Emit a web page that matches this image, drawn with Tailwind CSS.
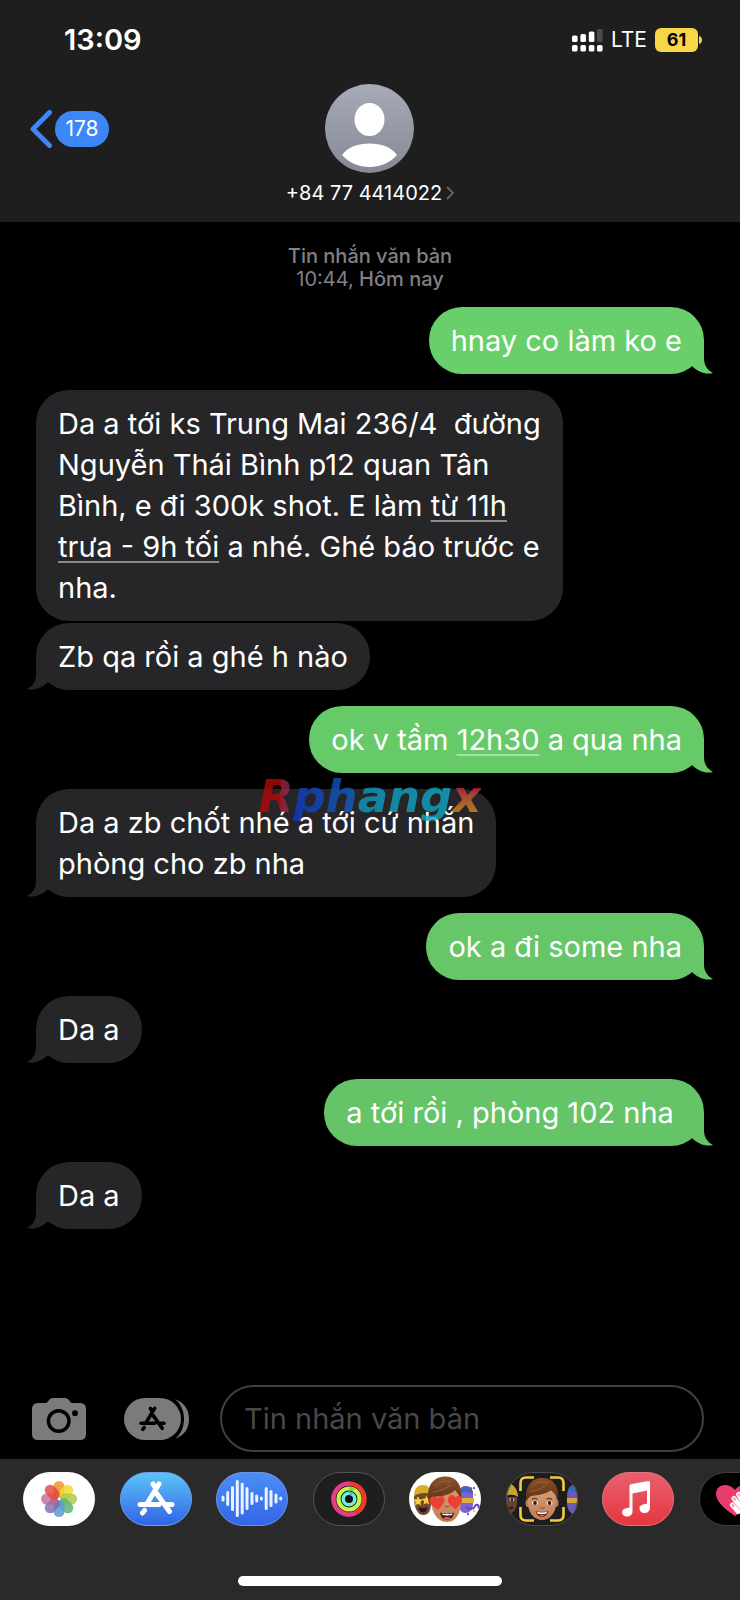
<!DOCTYPE html>
<html lang="vi">
<head>
    <meta charset="UTF-8">
    <meta name="viewport" content="width=device-width, initial-scale=1.0">
    <title>+84 77 4414022</title>
    <script src="https://cdn.jsdelivr.net/npm/@tailwindcss/browser@4"></script>
</head>
<body class="bg-black text-white font-['Inter',sans-serif] min-h-screen flex flex-col overflow-x-hidden">
    <!-- Shared shapes -->
    <svg class="hidden" aria-hidden="true">
        <symbol id="tail" viewBox="0 0 22 34">
            <path d="M0 0H13V18C13 25 16 30 22 33C15 35 7 32 1 26Z" fill="currentColor"/>
        </symbol>
        <symbol id="store" viewBox="0 0 38 36">
            <g fill="none" stroke="currentColor" stroke-width="5" stroke-linecap="round">
                <path d="M22 4L9.500 24.500M16 4L19 8.500M20 14L32.500 31.500M3 24.500H22M30 24.500H35M7.500 30.500L5.500 33"/>
            </g>
        </symbol>
    </svg>

    <!-- Header -->
    <header class="bg-[#1e1e1e] h-[222px] flex flex-col">
        <div class="h-20 pl-16 pr-[38px] flex items-center justify-between">
            <time class="text-[29px] leading-8 font-semibold">13:09</time>
            <div class="flex items-center">
                <svg class="w-[31px] h-[23px]" viewBox="0 0 31 23" fill="#fff">
                    <rect x="0" y="6.500" width="5.600" height="6.500" rx="1.600"/>
                    <rect x="8.400" y="5" width="5.600" height="8" rx="1.600"/>
                    <rect x="16.800" y="2.500" width="5.600" height="10.500" rx="1.600"/>
                    <rect x="25" y="0" width="5.600" height="13" rx="1.600" fill="#4b4b4b"/>
                    <rect x="0" y="16" width="5.600" height="6.500" rx="1.600"/>
                    <rect x="8.400" y="16" width="5.600" height="6.500" rx="1.600"/>
                    <rect x="16.800" y="16" width="5.600" height="6.500" rx="1.600"/>
                    <rect x="25" y="16" width="5.600" height="6.500" rx="1.600"/>
                </svg>
                <span class="ml-2 text-[21px] leading-6">LTE</span>
                <span class="ml-2 w-[43px] h-6 rounded-md bg-[#f7d64a] text-black text-[18px] leading-6 font-bold text-center">61</span>
                <svg class="ml-px w-[3px] h-2" viewBox="0 0 3 8"><path d="M0 0C4 1 4 7 0 8Z" fill="#f7d64a"/></svg>
            </div>
        </div>
        <div class="grid grid-cols-[1fr_auto_1fr] pt-1">
            <a href="#" class="flex items-center h-[89px] pl-[30px] gap-[3px]" aria-label="178">
                <svg class="w-[22px] h-[38px]" viewBox="0 0 22 38"><path d="M19.500 2.500L3 19L19.500 35.500" fill="none" stroke="#3d86f7" stroke-width="5" stroke-linecap="round" stroke-linejoin="round"/></svg>
                <span class="w-[54px] h-9 rounded-full bg-[#3d86f7] text-[21px] leading-9 text-center">178</span>
            </a>
            <button class="flex flex-col items-center">
                <svg class="w-[89px] h-[89px]" viewBox="0 0 89 89">
                    <defs>
                        <linearGradient id="avatar" x1="0" y1="0" x2="0" y2="1"><stop offset="0" stop-color="#a7abb9"/><stop offset="1" stop-color="#848993"/></linearGradient>
                    </defs>
                    <circle cx="44.500" cy="44.500" r="44.500" fill="url(#avatar)"/>
                    <ellipse cx="44.500" cy="35.500" rx="15" ry="16.500" fill="#fff"/>
                    <path d="M17 71C23 63 33 59.500 44.500 59.500S66 63 72 71C65 79 55 83 44.500 83S24 79 17 71Z" fill="#fff"/>
                </svg>
                <span class="mt-2 flex items-center gap-1 text-[20px] leading-6">+84 77 4414022
                    <svg class="w-2 h-3.5" viewBox="0 0 8 14"><path d="M1 1L7 7L1 13" fill="none" stroke="#68686c" stroke-width="1.800"/></svg>
                </span>
            </button>
        </div>
    </header>

    <!-- Messages -->
    <main class="flex-1 flex flex-col px-9 pt-[23px] text-[29px] leading-[41px]">
        <p class="text-center text-[20px] leading-[23px] font-medium text-[#818187] mb-4">Tin nhắn văn bản<br><span class="font-normal">10:44,</span> Hôm nay</p>

        <div class="self-end relative bg-[#69cf6a] rounded-[33px] px-[22px] py-[13px]">hnay co làm ko e
            <svg class="absolute -right-[9px] bottom-0 w-[22px] h-[34px] text-[#69cf6a]"><use href="#tail"/></svg>
        </div>

        <div class="self-start mt-4 bg-[#262628] rounded-[33px] px-[22px] py-[13px]">Da a tới ks Trung Mai 236/4&nbsp; đường<br>Nguyễn Thái Bình p12 quan Tân<br>Bình, e đi 300k shot. E làm <a href="#" class="underline decoration-2 decoration-[#8b8b8d] underline-offset-4">từ 11h<br>trưa - 9h tối</a> a nhé. Ghé báo trước e<br>nha.</div>

        <div class="self-start relative mt-0.5 bg-[#262628] rounded-[33px] px-[22px] py-[13px]">Zb qa rồi a ghé h nào
            <svg class="absolute -left-[9px] bottom-0 w-[22px] h-[34px] -scale-x-100 text-[#262628]"><use href="#tail"/></svg>
        </div>

        <div class="self-end relative mt-4 bg-[#67ca69] rounded-[33px] px-[22px] py-[13px]">ok v tầm <a href="#" class="underline decoration-2 decoration-[#a8e0a9] underline-offset-4">12h30</a> a qua nha
            <svg class="absolute -right-[9px] bottom-0 w-[22px] h-[34px] text-[#67ca69]"><use href="#tail"/></svg>
        </div>

        <div class="relative mt-4 flex">
            <div class="relative bg-[#262628] rounded-[33px] px-[22px] py-[13px]">Da a zb chốt nhé a tới cứ nhắn<br>phòng cho zb nha
                <svg class="absolute -left-[9px] bottom-0 w-[22px] h-[34px] -scale-x-100 text-[#262628]"><use href="#tail"/></svg>
            </div>
            <!-- Watermark -->
            <div class="absolute inset-x-0 -top-[18px] text-center pointer-events-none font-['DejaVu_Sans',sans-serif] font-bold italic text-[45px] leading-[52px] text-transparent opacity-80">
                <span class="bg-linear-to-r from-[#b80808] from-60% to-[#6c2a78] bg-clip-text">R</span><span class="bg-linear-to-r from-[#1238c0] to-[#1262c0] bg-clip-text">ph</span><span class="bg-linear-to-r from-[#1098c0] to-[#10a8c4] bg-clip-text">ang</span><span class="bg-linear-to-b from-[#c00840] from-30% to-[#d09010] to-80% bg-clip-text">x</span>
            </div>
        </div>

        <div class="self-end relative mt-4 bg-[#66c668] rounded-[33px] px-[22px] py-[13px]">ok a đi some nha
            <svg class="absolute -right-[9px] bottom-0 w-[22px] h-[34px] text-[#66c668]"><use href="#tail"/></svg>
        </div>

        <div class="self-start relative mt-4 bg-[#262628] rounded-[33px] px-[22px] py-[13px]">Da a
            <svg class="absolute -left-[9px] bottom-0 w-[22px] h-[34px] -scale-x-100 text-[#262628]"><use href="#tail"/></svg>
        </div>

        <div class="self-end relative mt-4 bg-[#65c467] rounded-[33px] px-[22px] py-[13px]">a tới rồi , phòng 102 nha&nbsp;
            <svg class="absolute -right-[9px] bottom-0 w-[22px] h-[34px] text-[#65c467]"><use href="#tail"/></svg>
        </div>

        <div class="self-start relative mt-4 bg-[#262628] rounded-[33px] px-[22px] py-[13px]">Da a
            <svg class="absolute -left-[9px] bottom-0 w-[22px] h-[34px] -scale-x-100 text-[#262628]"><use href="#tail"/></svg>
        </div>
    </main>

    <!-- Compose bar -->
    <form class="flex items-center pl-8 pr-9 pb-[7px]">
        <button type="button" aria-label="Camera">
            <svg class="w-[54px] h-[42px]" viewBox="0 0 54 42">
                <path d="M6 5H14C16 5 17 0 21 0H33C37 0 38 5 40 5H48Q54 5 54 11V36Q54 42 48 42H6Q0 42 0 36V11Q0 5 6 5Z" fill="#7b7b7b"/>
                <circle cx="26.700" cy="23" r="10.300" fill="none" stroke="#000" stroke-width="3.400"/>
                <circle cx="43" cy="15.300" r="3" fill="#000"/>
            </svg>
        </button>
        <button type="button" class="ml-[38px]" aria-label="App Store">
            <svg class="w-[66px] h-[42px]" viewBox="0 0 66 42">
                <path d="M51 1C61 5 65 12 65 21S61 37 51 41C57 36 60 29 60 21S57 6 51 1Z" fill="#7b7b7b"/>
                <rect width="57" height="42" rx="21" fill="#7b7b7b"/>
                <use href="#store" x="14" y="7.500" width="29" height="26" class="text-black"/>
            </svg>
        </button>
        <input type="text" aria-label="Tin nhắn văn bản" placeholder="Tin nhắn văn bản" class="ml-[30px] flex-1 min-w-0 h-[67px] rounded-full border-2 border-[#404042] bg-transparent px-[22px] text-[29px] placeholder:text-[#48484a]">
    </form>

    <!-- App drawer -->
    <footer class="bg-[#2a2a2a] h-[141px] pt-[13px] flex flex-col justify-between overflow-hidden">
        <nav class="flex justify-between ml-[23px] -mr-[31px]">
            <button aria-label="Ảnh">
                <svg class="w-[72px] h-[54px]" viewBox="0 0 72 54">
                    <rect width="72" height="54" rx="27" fill="#fff"/>
                    <g transform="translate(36 27)">
                        <rect x="-5.500" y="-18" width="11" height="17" rx="5.500" fill="#f29a35" opacity=".9"/>
                        <rect x="-5.500" y="-18" width="11" height="17" rx="5.500" fill="#ecdc30" opacity=".85" transform="rotate(45)"/>
                        <rect x="-5.500" y="-18" width="11" height="17" rx="5.500" fill="#aacb46" opacity=".85" transform="rotate(90)"/>
                        <rect x="-5.500" y="-18" width="11" height="17" rx="5.500" fill="#5fb578" opacity=".85" transform="rotate(135)"/>
                        <rect x="-5.500" y="-18" width="11" height="17" rx="5.500" fill="#5b9bd5" opacity=".85" transform="rotate(180)"/>
                        <rect x="-5.500" y="-18" width="11" height="17" rx="5.500" fill="#8069b0" opacity=".8" transform="rotate(225)"/>
                        <rect x="-5.500" y="-18" width="11" height="17" rx="5.500" fill="#c0608c" opacity=".75" transform="rotate(270)"/>
                        <rect x="-5.500" y="-18" width="11" height="17" rx="5.500" fill="#e2453a" opacity=".8" transform="rotate(315)"/>
                        <circle r="1.300" fill="#fff"/>
                    </g>
                </svg>
            </button>
            <button aria-label="App Store">
                <svg class="w-[72px] h-[54px]" viewBox="0 0 72 54">
                    <defs><linearGradient id="sky" x1="0" y1="0" x2="0" y2="1"><stop offset="0" stop-color="#5cc4f7"/><stop offset="1" stop-color="#3163e4"/></linearGradient></defs>
                    <rect x=".5" y=".5" width="71" height="53" rx="26.500" fill="url(#sky)" stroke="#6aa0ee"/>
                    <use href="#store" x="17" y="8" width="38" height="36" class="text-white"/>
                </svg>
            </button>
            <button aria-label="Âm thanh">
                <svg class="w-[72px] h-[54px]" viewBox="0 0 72 54">
                    <defs><linearGradient id="wave" x1="0" y1="0" x2="0" y2="1"><stop offset="0" stop-color="#4a8ff6"/><stop offset="1" stop-color="#3465e6"/></linearGradient></defs>
                    <rect x=".5" y=".5" width="71" height="53" rx="26.500" fill="url(#wave)" stroke="#6a95ee"/>
                    <path d="M7 25V28M11.700 20.500V32.500M16.500 15.500V37.500M21.300 9.500V43.500M26.200 12V41M31 16.500V36.500M36 21.500V31.500M40.700 24V29M45.400 26V27M50.200 16.500V36.500M55 19.500V33.500M60 23V30M64.700 26V27" stroke="#eaf3ff" stroke-width="3" stroke-linecap="round"/>
                </svg>
            </button>
            <button aria-label="Hoạt động">
                <svg class="w-[72px] h-[54px]" viewBox="0 0 72 54" fill="none">
                    <rect x=".5" y=".5" width="71" height="53" rx="26.500" fill="#1e1e1e" stroke="#545454"/>
                    <circle cx="36" cy="27" r="18" fill="#111"/>
                    <path d="M36 11.500A15.500 15.500 0 0 1 43 40.800" stroke="#ec3a30" stroke-width="4.600"/>
                    <path d="M43 40.800A15.500 15.500 0 1 1 36 11.500" stroke="#e83c86" stroke-width="4.600"/>
                    <circle cx="36" cy="27" r="10.500" stroke="#c2f64b" stroke-width="4.200"/>
                    <path d="M36 16.500A10.500 10.500 0 0 1 41 17.800" stroke="#8fd63c" stroke-width="4.200"/>
                    <circle cx="36" cy="27" r="5.800" stroke="#6ff0dd" stroke-width="3.600"/>
                    <path d="M36 21.200A5.800 5.800 0 0 1 39.500 22.400" stroke="#4cc4d8" stroke-width="3.600"/>
                </svg>
            </button>
            <button aria-label="Nhãn dán Memoji">
                <svg class="w-[72px] h-[54px]" viewBox="0 0 72 54">
                    <defs>
                        <linearGradient id="hair" x1="0" y1="0" x2="0" y2="1"><stop offset="0" stop-color="#8a512a"/><stop offset="1" stop-color="#5c3116"/></linearGradient>
                        <linearGradient id="skin" x1="0" y1="0" x2="0" y2="1"><stop offset="0" stop-color="#d79b72"/><stop offset="1" stop-color="#bf8058"/></linearGradient>
                    </defs>
                    <rect width="72" height="54" rx="27" fill="#fff"/>
                    <path d="M5 25C5 37 9 43 14.500 43S22 38 22 30V21H6Z" fill="#6d4733"/>
                    <path d="M5 24C5 16 9 13 14 13S21 16 21 22C16 20 10 21 5 24Z" fill="#d9ad28"/>
                    <path d="M9 24L10.400 27.200L14 27.600L11.400 30L12 33.500L9 31.700L6 33.500L6.600 30L4 27.600L7.600 27.200ZM17.500 23.500L18.800 26.500L22 27L19.600 29.300L20.200 32.500L17.500 31L14.500 32.500L15.200 29.300L13 27L16.200 26.500Z" fill="#f6cf3a"/>
                    <path d="M9.500 35C12 36.500 16 36.500 18.500 35C18 39 16 40.500 14 40.500S10 39 9.500 35Z" fill="#2c1512"/>
                    <path d="M50 22C50 16 53 14 57 14S64 17 64 22V32C64 38 60 41 56 41S50 37 50 32Z" fill="#7c62d6"/>
                    <path d="M50 21C51 16 54 13.500 58 14.500C62 15 64 18 64 22C60 20 55 20 50 21Z" fill="#3a68c8"/>
                    <path d="M50 26H65V31H50Z" fill="#dfae38"/>
                    <path d="M57 35C61 38 65 37 66 34C68 31 71 34 69 36" fill="none" stroke="#6145bd" stroke-width="2"/>
                    <circle cx="62" cy="16.500" r="1.300" fill="#c43b43"/><circle cx="66" cy="23" r="1.200" fill="#f1cf36"/><circle cx="65" cy="16" r="1.200" fill="#3a79e8"/><circle cx="59" cy="42" r="1.200" fill="#3a79e8"/><circle cx="65" cy="39" r="1.200" fill="#f1cf36"/>
                    <path d="M22 24C21 39 28 50 38 50S53 39 52 24C50 14 25 12 22 24Z" fill="url(#skin)"/>
                    <path d="M20 31C16 14 25 4 37 4.500C49 5 54 15 52 29C51 24 49 22 46 18C41 24 30 24 25 25C23 27 22 28 20 31Z" fill="url(#hair)"/>
                    <path d="M26 14C31 9 38 8 43 10M24 20C32 19 38 16 42 12" fill="none" stroke="#a5683b" stroke-width=".8"/>
                    <path d="M29 38C27 36 20 33 20.500 28C21 24 26 23 28.500 26.500C31 22 36 24 35.500 28C35 33 31 35 29 38Z" fill="#ed3f32"/>
                    <path d="M47 37C43 35 38 31 39 26.500C40 22 45 22 46.500 25.500C50 22 54 25 53 29C52 33 49 34 47 37Z" fill="#ed3f32"/>
                    <path d="M36 34Q38 35.500 40 34" fill="none" stroke="#96583b" stroke-width="1.200"/>
                    <path d="M31 40.500C35 42 41 42 45 40.500C44 45.500 42 47.500 38 47.500S32 45.500 31 40.500Z" fill="#501a19"/><path d="M33 41.500C36 42.300 40 42.300 43.500 41.500L43 43C40 43.600 36 43.600 33.500 43Z" fill="#fff"/><path d="M34.500 46Q38 44 41.500 46Q38 48.500 34.500 46Z" fill="#df6670"/>
                </svg>
            </button>
            <button aria-label="Memoji">
                <svg class="w-[72px] h-[54px]" viewBox="0 0 72 54">
                    <defs><clipPath id="pill"><rect width="72" height="54" rx="27"/></clipPath></defs>
                    <rect width="72" height="54" rx="27" fill="#1d1d1d"/>
                    <g clip-path="url(#pill)">
                        <path d="M-2 25H11C12 34 9 41 3 42H-2Z" fill="#654330"/><path d="M-2 25V12H5C9 14 12 19 12 25C8 22 3 22-2 25Z" fill="#c9a52e"/>
                        <ellipse cx="6" cy="27.500" rx="2.500" ry="1.600" fill="#fff"/><circle cx="6" cy="27.500" r="1.500" fill="#21130e"/><path d="M0 35Q4 38 7 35" stroke="#32160f" stroke-width="2" fill="none"/>
                        <path d="M61 25C61 17 64 13 68 13H74V42H68C64 42 61 37 61 31Z" fill="#6e57c2"/><path d="M62 20C63 15 66 12 74 13V21Z" fill="#3a68b8"/><path d="M61 26H74V31H61Z" fill="#d6a634"/>
                    </g>
                    <rect x=".5" y=".5" width="71" height="53" rx="26.500" fill="none" stroke="#4c4c4e"/>
                    <ellipse cx="21.500" cy="31" rx="2" ry="4" fill="#b57750"/><ellipse cx="50.500" cy="31" rx="2" ry="4" fill="#b57750"/>
                    <path d="M21.500 24C20.500 39 27 48 36 48S51.500 39 50.500 24C48 15 25 14 21.500 24Z" fill="url(#skin)"/>
                    <path d="M20.500 29C18 14 26 6 36 6S54 13 51.500 28C50.500 24 49 22 45 18C39 23 31 23 25 24C23 25 22 27 20.500 29Z" fill="url(#hair)"/>
                    <path d="M26 14C30 10 37 9 42 11M24 19.500C31 19 37 16 41 12" fill="none" stroke="#a5683b" stroke-width=".8"/>
                    <path d="M26 27.500Q28.500 25.500 31.500 27.300M40.500 27.300Q43.500 25.500 46 27.500" fill="none" stroke="#6a3b1f" stroke-width="1.300"/>
                    <ellipse cx="29" cy="31" rx="2.900" ry="1.900" fill="#fff"/><ellipse cx="43.500" cy="31" rx="2.900" ry="1.900" fill="#fff"/>
                    <circle cx="29" cy="31" r="1.900" fill="#29231a"/><circle cx="43.500" cy="31" r="1.900" fill="#29231a"/>
                    <path d="M34 35.500Q36 37 38.500 35.500" fill="none" stroke="#98583a" stroke-width="1.200"/>
                    <path d="M29.500 39C33 40.200 39 40.200 42.500 39C41.500 43 39 44.800 36 44.800S30.500 43 29.500 39Z" fill="#6b2721"/><path d="M31 39.800C34 40.700 38 40.700 41 39.800L40.500 41.500C37 42.300 35 42.300 31.500 41.500Z" fill="#fff"/><path d="M33.500 43.500Q36 42.200 38.500 43.500Q36 45 33.500 43.500Z" fill="#dd7478"/>
                    <path d="M14.500 19V11Q14.500 5.500 20 5.500H28M44 5.500H52Q57.500 5.500 57.500 11V19M57.500 35V43Q57.500 48.500 52 48.500H44M28 48.500H20Q14.500 48.500 14.500 43V35" fill="none" stroke="#f3cb3f" stroke-width="2.600"/>
                </svg>
            </button>
            <button aria-label="Âm nhạc">
                <svg class="w-[72px] h-[54px]" viewBox="0 0 72 54">
                    <defs><linearGradient id="music" x1="0" y1="0" x2="0" y2="1"><stop offset="0" stop-color="#e9606f"/><stop offset="1" stop-color="#e5363f"/></linearGradient></defs>
                    <rect x=".5" y=".5" width="71" height="53" rx="26.500" fill="url(#music)" stroke="#e5737c"/>
                    <path d="M27.500 14Q27.500 12.500 29 12.200L46 9Q48 8.700 48 10.500V35.500C48 39 45.500 41 42.500 41S37.500 39 37.500 36.500C37.500 33.500 40 32.500 45 31.500V18.500L30.500 21.500V39.500C30.500 43 28 44.500 25 44.500S20 42.500 20 40.500C20 37 23 36.500 27.500 35.500Z" fill="#fff"/>
                </svg>
            </button>
            <button aria-label="Digital Touch">
                <svg class="w-[72px] h-[54px]" viewBox="0 0 72 54">
                    <rect x=".5" y=".5" width="71" height="53" rx="26.500" fill="#000" stroke="#3e3e40"/>
                    <path d="M36 44C29 39 17 31 17 22C17 12 30 10 36 18C42 10 55 12 55 22C55 31 43 39 36 44Z" fill="#e93c6c"/>
                    <path d="M33.500 33L39 39.500M35 26.500L43 36M39.500 22.500L45 31" stroke="#fff" stroke-width="5" stroke-linecap="round"/>
                    <path d="M33.500 33L34.500 34M35 26.500L36 27.500M39.500 22.500L40 23.500" stroke="#f7a8c0" stroke-width="2.500" stroke-linecap="round"/>
                </svg>
            </button>
        </nav>
        <div class="self-center w-[264px] h-2.5 mb-3.5 rounded-full bg-white"></div>
    </footer>
</body>
</html>
